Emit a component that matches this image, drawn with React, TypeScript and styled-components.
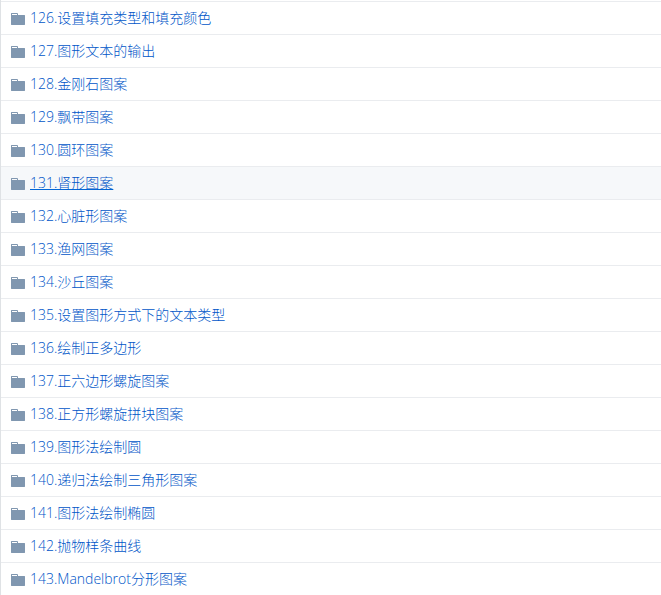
import React from "react";
import styled, { createGlobalStyle } from "styled-components";

const GlobalStyle = createGlobalStyle`
  * { box-sizing: border-box; }
  body { margin: 0; background: #fff; }
`;

const FileList = styled.ul`
  margin: 0;
  padding: 1px 0 0;
  list-style: none;
  border-left: 1px solid #dfe2e5;
  font-family: "Open Sans", "Noto Sans CJK SC", sans-serif;
  font-size: 14px;
  font-weight: 300;
  line-height: 20px;
`;

const Row = styled.li<{ $active?: boolean }>`
  display: flex;
  align-items: center;
  gap: 5px;
  padding: 6px 10px;
  border-top: 1px solid #eaecef;
  background: ${(p) => (p.$active ? "#f6f8fa" : "#fff")};
  a { text-decoration: ${(p) => (p.$active ? "underline #0366d6" : "none")}; }
`;

const FolderSvg = styled.svg`
  flex: none;
  width: 14px;
  height: 18px;
  fill: #8097b0;
`;

const NameLink = styled.a`
  color: #0056c8;
  white-space: nowrap;
`;

const folders = [
  "126.设置填充类型和填充颜色",
  "127.图形文本的输出",
  "128.金刚石图案",
  "129.飘带图案",
  "130.圆环图案",
  "131.肾形图案",
  "132.心脏形图案",
  "133.渔网图案",
  "134.沙丘图案",
  "135.设置图形方式下的文本类型",
  "136.绘制正多边形",
  "137.正六边形螺旋图案",
  "138.正方形螺旋拼块图案",
  "139.图形法绘制圆",
  "140.递归法绘制三角形图案",
  "141.图形法绘制椭圆",
  "142.抛物样条曲线",
  "143.Mandelbrot分形图案",
];

export default function App() {
  return (
    <>
      <GlobalStyle />
      <FileList>
        {folders.map((name) => (
          <Row key={name} $active={name.startsWith("131")}>
            <FolderSvg viewBox="0 -2 14 18" aria-hidden="true">
              <path d="M13.5 4H7V3c0-.66-.31-1-1-1H.5c-.3 0-.5.2-.5.5v11c0 .3.2.5.5.5h13c.3 0 .5-.2.5-.5v-9c0-.3-.2-.5-.5-.5zM6 4H1V3h5v1z" />
            </FolderSvg>
            <NameLink href="#">{name}</NameLink>
          </Row>
        ))}
      </FileList>
    </>
  );
}
